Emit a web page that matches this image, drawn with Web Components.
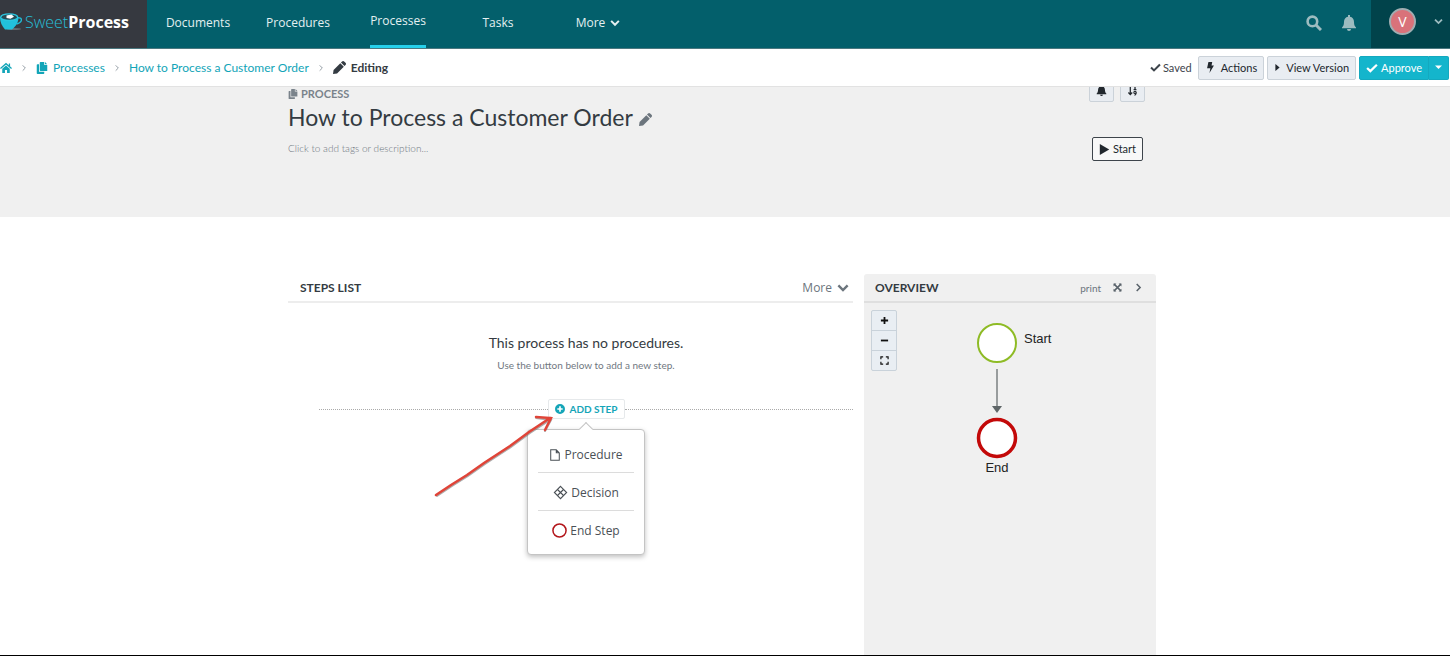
<!DOCTYPE html>
<html lang="en">
<head>
<meta charset="utf-8">
<meta name="viewport" content="width=device-width, initial-scale=1">
<title>How to Process a Customer Order - SweetProcess</title>
<style>
  html, body { margin: 0; height: 100%; }
  body {
    font-family: "Open Sans", "Noto Sans", sans-serif;
    font-size: 12px;
    line-height: 16px;
    color: #3d444b;
    background: #fff;
  }
</style>
</head>
<body>
<sweet-app></sweet-app>

<script>
// small helper: one template per element, cloned into an open shadow root
function define(tag, html, setup) {
  const template = document.createElement('template');
  template.innerHTML = html;
  customElements.define(tag, class extends HTMLElement {
    constructor() {
      super();
      this.attachShadow({ mode: 'open' }).appendChild(template.content.cloneNode(true));
    }
    connectedCallback() {
      if (setup) setup(this, this.shadowRoot);
    }
  });
}

/* --- ICONS --- */
const ICONS = {
  home: ['0 0 16 14', '<path d="M8 3.600 3 8v5.500h3.600V9.500h2.800v4H13V8z"/><path d="M.6 7.600 8 1.200l7.400 6.400M12.600 1v3.600" fill="none" stroke="currentColor" stroke-width="1.700"/>'],
  copy: ['0 0 14 16', '<path d="M5 0h5v4h4v8H5a1 1 0 0 1-1-1V1a1 1 0 0 1 1-1zM11 0l3 3h-3z"/><path d="M0 4a1 1 0 0 1 1-1h2v10h7v2a1 1 0 0 1-1 1H1a1 1 0 0 1-1-1z"/>'],
  pencil: ['0 0 16 16', '<path d="M9 2.700 13.300 7 5 15.300 0 16l.7-5zM9.800 1.900 11.200.6a1.800 1.800 0 0 1 2.500 0l1.700 1.700a1.800 1.800 0 0 1 0 2.500L14.100 6.200z"/>'],
  check: ['0 0 16 12', '<path d="m1.5 6 4.3 4.2L14.5 1.6" fill="none" stroke="currentColor" stroke-width="3"/>'],
  bolt: ['0 0 10 16', '<path d="M2 0h5.500L6.500 5H10L3.500 16l1.300-7H0z"/>'],
  caretright: ['0 0 6 10', '<path d="M0 0l6 5-6 5z"/>'],
  caretdown: ['0 0 10 6', '<path d="M0 0h10L5 5z"/>'],
  down: ['0 0 14 10', '<path d="m1.6 2 5.4 5.4L12.4 2" fill="none" stroke="currentColor" stroke-width="2.8"/>'],
  right: ['0 0 8 12', '<path d="m1.6 1.2 4.6 4.8-4.6 4.8" fill="none" stroke="currentColor" stroke-width="2"/>'],
  thin: ['0 0 8 12', '<path d="m2 2 4 4-4 4" fill="none" stroke="currentColor" stroke-width="1.4"/>'],
  search: ['0 0 16 16', '<circle cx="6.4" cy="6.4" r="4.8" fill="none" stroke="currentColor" stroke-width="2.6"/><path d="m10 10 5 5" stroke="currentColor" stroke-width="3"/>'],
  bell: ['0 0 14 16', '<path d="M6 0h2v1.800c2.500.5 4 2.300 4 5.200 0 3 .8 4.300 2 5.500v.8H0v-.8C1.200 11.300 2 10 2 7c0-2.900 1.500-4.700 4-5.200zM5 14h4a2 2 0 0 1-4 0z"/>'],
  sort: ['0 0 12 14', '<path d="M3.200 1v11M.8 9.500l2.400 2.700 2.400-2.700M7.600 1.800l1.600-.8v5M7.400 6h3.600" fill="none" stroke="currentColor" stroke-width="1.600"/><circle cx="9.200" cy="9.600" r="1.500" fill="none" stroke="currentColor" stroke-width="1.300"/><path d="M10.700 9.500c0 2-.6 3-2.200 3.700" fill="none" stroke="currentColor" stroke-width="1.300"/>'],
  play: ['0 0 12 14', '<path d="M0 0l12 7-12 7z"/>'],
  expand: ['0 0 16 16', '<path d="M1 1h5L1 6zM15 1v5l-5-5zM1 15v-5l5 5zM15 15h-5l5-5z"/><path d="m2 2 12 12M14 2 2 14" stroke="currentColor" stroke-width="2.600"/>'],
  plus: ['0 0 10 10', '<path d="M5 1v8M1 5h8" stroke="currentColor" stroke-width="2"/>'],
  minus: ['0 0 10 10', '<path d="M1 5h8" stroke="currentColor" stroke-width="2"/>'],
  frame: ['0 0 10 10', '<path d="M1 3.500V1h2.500M6.500 1H9v2.500M9 6.500V9H6.500M3.500 9H1V6.500" fill="none" stroke="currentColor" stroke-width="1.300"/>'],
  add: ['0 0 12 12', '<path fill-rule="evenodd" d="M6 0a6 6 0 1 1 0 12A6 6 0 0 1 6 0zM5 2.800V5H2.800v2H5v2.200h2V7h2.200V5H7V2.800z"/>'],
  file: ['0 0 12 14', '<path d="M1 1h6.500L11 4.500V13H1zM7.500 1v3.500H11" fill="none" stroke="currentColor" stroke-width="1.200"/>'],
  decision: ['0 0 16 16', '<g fill="none" stroke="currentColor" stroke-width="1.200"><path d="m8 1.500 6.500 6.500L8 14.500 1.500 8z"/><path d="m4.800 4.800 6.400 6.400M11.200 4.800 4.800 11.200"/></g>'],
  ring: ['0 0 16 16', '<circle cx="8" cy="8" r="7" fill="none" stroke="#b3161b" stroke-width="1.600"/>'],
  cup: ['0 0 22 18', '<path d="M17 5c6-1.500 6 4.500-.5 6" fill="none" stroke="#22b9d3" stroke-width="1.400"/><ellipse cx="14" cy="16" rx="7" ry="1" fill="#656a70"/><path d="M0 4c0 5.500 2 9 5 12.500h7c4-3.500 6.500-7 6.500-12.500z" fill="#22c0dc"/><ellipse cx="9.200" cy="4.200" rx="9.200" ry="4" fill="#2bc5df"/><ellipse cx="9.200" cy="4.200" rx="7.600" ry="2.600" fill="#274b55"/><path d="m6.500 2.600 5-1.200 2.500 2.400-3.500 2-4-.8z" fill="#fff"/>']
};

class SweetIcon extends HTMLElement {
  constructor() {
    super();
    this.attachShadow({ mode: 'open' });
  }
  connectedCallback() {
    const [box, shape] = ICONS[this.getAttribute('name')];
    const size = this.getAttribute('size') || 12;
    this.shadowRoot.innerHTML = `
      <style>
        :host { display: inline-flex; flex: none; }
        svg { display: block; width: ${size}px; height: ${size}px; fill: currentColor; }
      </style>
      <svg viewBox="${box}" aria-hidden="true">${shape}</svg>`;
  }
}
customElements.define('sweet-icon', SweetIcon);

/* --- TOP BAR --- */
define('nav-item', `
  <style>
    :host { display: flex; justify-content: center; width: 100px; height: 48px; }
    a {
      display: flex; align-items: center; gap: 5px;
      box-sizing: border-box; padding-bottom: 3px;
      color: #e4f0f1; text-decoration: none;
    }
    :host([active]) a { border-bottom: 3px solid #26d0ea; }
  </style>
  <a href="#"><slot></slot></a>
`);

define('top-bar', `
  <style>
    :host { display: flex; height: 48px; background: #035f6b; border-bottom: 1px solid #4b7880; }
    .logo {
      display: flex; align-items: center; gap: 3px;
      box-sizing: border-box; width: 147px; padding-bottom: 4px;
      background: #363940; text-decoration: none;
      font-size: 16px; color: #27bdd6; font-weight: 300;
    }
    .logo b { color: #fff; font-weight: 700; }
    nav { display: flex; flex: 1; padding-left: 1px; }
    .tools { display: flex; align-items: center; gap: 19px; padding: 0 14px 3px; }
    button { display: flex; padding: 0; border: 0; background: none; color: #9dbcc0; font: inherit; }
    .user {
      display: flex; align-items: center; gap: 18px;
      box-sizing: border-box; width: 79px; padding: 0 7px 5px 18px;
      background: #01434b;
    }
    .avatar {
      box-sizing: border-box; width: 27px; height: 27px;
      border: 2px solid #a1adb1; border-radius: 50%;
      background: #d9727a; color: #fff;
      font-size: 14px; line-height: 23px; text-align: center;
    }
  </style>
  <a class="logo" href="#" aria-label="SweetProcess">
    <sweet-icon name="cup" size="22"></sweet-icon><span>Sweet<b>Process</b></span>
  </a>
  <nav>
    <nav-item>Documents</nav-item>
    <nav-item>Procedures</nav-item>
    <nav-item active>Processes</nav-item>
    <nav-item>Tasks</nav-item>
    <nav-item>More <sweet-icon name="down" size="10"></sweet-icon></nav-item>
  </nav>
  <div class="tools">
    <button aria-label="Search"><sweet-icon name="search" size="16"></sweet-icon></button>
    <button aria-label="Notifications"><sweet-icon name="bell" size="16"></sweet-icon></button>
  </div>
  <div class="user">
    <div class="avatar">V</div>
    <button aria-label="Account menu"><sweet-icon name="down" size="9"></sweet-icon></button>
  </div>
`);

/* --- BUTTONS --- */
define('sweet-button', `
  <style>
    :host { display: inline-flex; }
    button {
      display: flex; align-items: center; gap: 5px;
      box-sizing: border-box; height: 24px; padding: 0 6px;
      border: 1px solid #cbd2d9; border-radius: 2px;
      background: #e9edf2; color: #22282e;
      font: inherit; font-family: Lato, sans-serif; font-size: 11px; white-space: nowrap;
    }
    :host([kind="primary"]) button { background: #14b5cc; border-color: #14a9bf; color: #fff; gap: 3px; }
    :host([kind="outline"]) button { background: #f8f8f8; border-color: #3d444b; gap: 3px; }
    :host([part-of="start"]) button { border-radius: 2px 0 0 2px; }
    :host([part-of="end"]) button { border-radius: 0 2px 2px 0; border-left: 0; }
  </style>
  <button><slot></slot></button>
`, (host, root) => {
  const label = host.getAttribute('label');
  if (label) root.querySelector('button').setAttribute('aria-label', label);
});

/* --- BREADCRUMBS --- */
define('crumb-bar', `
  <style>
    :host {
      display: flex; align-items: center; justify-content: space-between;
      height: 37px; border-bottom: 1px solid #e2e2e2; background: #fff;
      font-family: Lato, sans-serif;
    }
    nav, .actions { display: flex; align-items: center; }
    nav { gap: 8px; color: #8d979e; }
    a { display: flex; align-items: center; gap: 5px; color: #12a5b8; text-decoration: none; }
    .here { display: flex; align-items: center; gap: 5px; color: #343b42; font-weight: 700; }
    .actions { gap: 3px; padding-right: 1px; }
    .saved { display: flex; align-items: center; gap: 2px; font-size: 11px; margin-right: 3px; }
    .split { display: flex; }
  </style>
  <nav aria-label="Breadcrumb">
    <a href="#" aria-label="Home"><sweet-icon name="home" size="12"></sweet-icon></a>
    <sweet-icon name="thin" size="8"></sweet-icon>
    <a href="#"><sweet-icon name="copy" size="12"></sweet-icon>Processes</a>
    <sweet-icon name="thin" size="8"></sweet-icon>
    <a href="#">How to Process a Customer Order</a>
    <sweet-icon name="thin" size="8"></sweet-icon>
    <span class="here"><sweet-icon name="pencil" size="13"></sweet-icon>Editing</span>
  </nav>
  <div class="actions">
    <span class="saved"><sweet-icon name="check" size="11"></sweet-icon>Saved</span>
    <sweet-button><sweet-icon name="bolt" size="11"></sweet-icon>Actions</sweet-button>
    <sweet-button><sweet-icon name="caretright" size="7"></sweet-icon>View Version</sweet-button>
    <div class="split">
      <sweet-button kind="primary" part-of="start"><sweet-icon name="check" size="12"></sweet-icon>Approve</sweet-button>
      <sweet-button kind="primary" part-of="end" label="More approve options"><sweet-icon name="caretdown" size="7"></sweet-icon></sweet-button>
    </div>
  </div>
`);

/* --- PROCESS TITLE --- */
define('process-hero', `
  <style>
    :host { display: block; overflow: hidden; min-height: 130px; padding-right: 6px; background: #f0f0f0; }
    .inner { display: flex; justify-content: space-between; max-width: 868px; margin: 0 auto; }
    .kind {
      display: flex; align-items: center; gap: 3px;
      font-family: Lato, sans-serif; font-size: 11px; line-height: 13px; font-weight: 700;
      color: #7a838b;
    }
    h1 {
      display: flex; align-items: center; gap: 6px;
      margin: 0;
      font-family: Lato, sans-serif; font-size: 23px; line-height: 34px; font-weight: 400;
      color: #343b42;
    }
    h1 button { display: flex; padding: 4px 0 0; border: 0; background: none; color: #6c757d; }
    .hint { margin: 6px 0 0; font-family: Lato, sans-serif; font-size: 10px; font-weight: 300; color: #6c757d; }
    /* the row of tools is scrolled partly under the bar above */
    .side { display: flex; flex-direction: column; align-items: flex-end; gap: 35px; margin-top: -9px; padding-right: 11px; }
    .tools { display: flex; gap: 6px; }
    .start { padding-right: 2px; }
  </style>
  <div class="inner">
    <div>
      <div class="kind"><sweet-icon name="copy" size="10"></sweet-icon>PROCESS</div>
      <h1>How to Process a Customer Order <button aria-label="Edit title"><sweet-icon name="pencil" size="13"></sweet-icon></button></h1>
      <p class="hint">Click to add tags or description...</p>
    </div>
    <div class="side">
      <div class="tools">
        <sweet-button label="Notify"><sweet-icon name="bell" size="11"></sweet-icon></sweet-button>
        <sweet-button label="Sort"><sweet-icon name="sort" size="11"></sweet-icon></sweet-button>
      </div>
      <sweet-button class="start" kind="outline"><sweet-icon name="play" size="11"></sweet-icon>Start</sweet-button>
    </div>
  </div>
`);

/* --- ADD STEP MENU --- */
define('menu-item', `
  <style>
    :host { display: block; border-bottom: 1px solid #dcdcdc; }
    :host(:last-child) { border-bottom: 0; }
    button {
      display: flex; align-items: center; justify-content: center; gap: 3px;
      width: 100%; height: 37px; padding: 2px 0 0; border: 0; background: none;
      color: #4a5056; font: inherit;
    }
  </style>
  <button role="menuitem"><slot></slot></button>
`);

define('step-menu', `
  <style>
    :host {
      display: block; box-sizing: border-box; width: 118px; padding: 5px 10px 6px;
      border: 1px solid #c4c4c4; border-radius: 4px;
      background: #fff; box-shadow: 0 2px 5px rgba(0, 0, 0, .25);
    }
    .tip {
      position: absolute; top: -6px; left: 50%;
      width: 9px; height: 9px; margin-left: -5px;
      border: solid #c4c4c4; border-width: 1px 0 0 1px;
      background: #fff; transform: rotate(45deg);
    }
  </style>
  <div class="tip"></div>
  <div role="menu">
    <menu-item><sweet-icon name="file" size="12"></sweet-icon>Procedure</menu-item>
    <menu-item><sweet-icon name="decision" size="15"></sweet-icon>Decision</menu-item>
    <menu-item><sweet-icon name="ring" size="15"></sweet-icon>End Step</menu-item>
  </div>
`);

/* --- STEPS LIST --- */
define('steps-list', `
  <style>
    :host { display: block; }
    header {
      display: flex; align-items: center; justify-content: space-between;
      height: 27px; padding: 0 4px 0 12px; border-bottom: 2px solid #ededed;
    }
    h2 { margin: 0; font-family: Lato, sans-serif; font-size: 12px; font-weight: 700; color: #343b42; }
    header button { display: flex; align-items: center; gap: 5px; padding: 0; border: 0; background: none; color: #6c757d; font: inherit; }
    .empty { padding: 32px 0 0 31px; text-align: center; }
    h3 { margin: 0; font-family: Lato, sans-serif; font-size: 14px; line-height: 16px; font-weight: 400; color: #343b42; }
    p { margin: 6px 0 0; font-family: Lato, sans-serif; font-size: 10px; color: #70787f; }
    .row { display: flex; align-items: center; margin-top: 26px; }
    .row::before, .row::after { content: ""; flex: 1; border-top: 1px dotted #aaa; }
    .anchor { position: relative; }
    .add {
      display: flex; align-items: center; gap: 5px;
      box-sizing: border-box; height: 20px; padding: 0 6px;
      border: 1px solid #e6e9eb; border-radius: 2px; background: #fff;
      color: #15a5b8; font-family: Lato, sans-serif; font-size: 10px; font-weight: 700;
    }
    step-menu { position: absolute; top: 30px; left: 50%; margin-left: -59px; }
    .pointer { position: absolute; right: 72px; top: 15px; width: 120px; height: 84px; overflow: visible; fill: none; stroke-linecap: round; }
  </style>
  <header>
    <h2>STEPS LIST</h2>
    <button>More <sweet-icon name="down" size="12"></sweet-icon></button>
  </header>
  <div class="empty">
    <h3>This process has no procedures.</h3>
    <p>Use the button below to add a new step.</p>
    <div class="row">
      <div class="anchor">
        <button class="add" aria-expanded="true"><sweet-icon name="add" size="10"></sweet-icon>ADD STEP</button>
        <step-menu></step-menu>
        <svg class="pointer" viewBox="0 0 120 84" aria-hidden="true">
          <path d="M4 82 19 72 35 62 52 50 78 33 97 19 117 6M103 4 118 6 112 17" stroke="#777" stroke-width="2" opacity=".6"/>
          <path d="M3 81 18 71 34 61 51 49 77 32 96 18 117 4M103 3 118 4 112 16" stroke="#e04438" stroke-width="2.500"/>
        </svg>
      </div>
    </div>
  </div>
`);

/* --- OVERVIEW --- */
define('flow-overview', `
  <style>
    :host { display: flex; flex-direction: column; border-radius: 3px 3px 0 0; background: #f0f0f0; }
    header {
      display: flex; align-items: center; gap: 12px;
      height: 27px; padding: 0 13px 0 11px; border-bottom: 2px solid #dfdfdf;
    }
    h2 { flex: 1; margin: 0; font-family: Lato, sans-serif; font-size: 12px; font-weight: 700; color: #343b42; }
    header a { color: #6c757d; font-family: Lato, sans-serif; font-size: 10px; text-decoration: none; }
    header button { display: flex; padding: 0; border: 0; background: none; color: #59626a; }
    .canvas { position: relative; flex: 1; min-height: 180px; padding: 7px; }
    .zoom {
      display: flex; flex-direction: column; width: 24px;
      border: 1px solid #c9d2da; border-radius: 2px; background: #e9eef3;
    }
    .zoom button {
      display: flex; align-items: center; justify-content: center;
      height: 19px; padding: 0; border: 0; background: none; color: #111;
    }
    .zoom button + button { height: 20px; border-top: 1px solid #c9d2da; }
    .flow { position: absolute; left: 108px; top: 14px; width: 90px; height: 162px; }
    text { font-family: "Liberation Sans", Arial, sans-serif; font-size: 13px; fill: #222; }
  </style>
  <header>
    <h2>OVERVIEW</h2>
    <a href="#">print</a>
    <button aria-label="Full screen"><sweet-icon name="expand" size="9"></sweet-icon></button>
    <button aria-label="Collapse"><sweet-icon name="right" size="9"></sweet-icon></button>
  </header>
  <div class="canvas">
    <div class="zoom">
      <button aria-label="Zoom in"><sweet-icon name="plus" size="9"></sweet-icon></button>
      <button aria-label="Zoom out"><sweet-icon name="minus" size="9"></sweet-icon></button>
      <button aria-label="Fit"><sweet-icon name="frame" size="9"></sweet-icon></button>
    </div>
    <svg class="flow" viewBox="0 0 90 162">
      <circle cx="25" cy="26" r="19" fill="#fff" stroke="#8ebb25" stroke-width="2"/>
      <text x="52" y="26">Start</text>
      <path d="M25 52v38" stroke="#7b8082" stroke-width="1.500"/>
      <path d="M20 89h10l-5 7z" fill="#5f6668"/>
      <circle cx="25" cy="121" r="18.500" fill="#fff" stroke="#c30909" stroke-width="3.500"/>
      <text x="25" y="155" text-anchor="middle">End</text>
    </svg>
  </div>
`);

/* --- PAGE --- */
define('sweet-app', `
  <style>
    :host { display: flex; flex-direction: column; box-sizing: border-box; min-height: 100%; border-bottom: 1px solid #000; }
    main { display: flex; flex: 1; padding: 57px 6px 0 0; }
    .columns { display: flex; gap: 11px; flex: 1; max-width: 868px; margin: 0 auto; }
    steps-list { flex: 1; }
    flow-overview { width: 292px; }
  </style>
  <top-bar></top-bar>
  <crumb-bar></crumb-bar>
  <process-hero></process-hero>
  <main>
    <div class="columns">
      <steps-list></steps-list>
      <flow-overview></flow-overview>
    </div>
  </main>
`);
</script>
</body>
</html>
